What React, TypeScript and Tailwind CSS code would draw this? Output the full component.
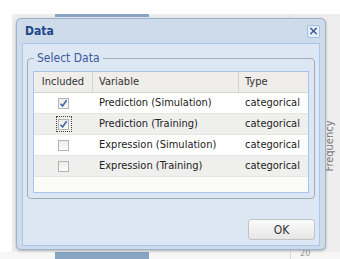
import { X } from "lucide-react";

type Row = {
  included: boolean;
  variable: string;
  type: string;
  focused?: boolean;
};

const rows: Row[] = [
  { included: true, variable: "Prediction (Simulation)", type: "categorical" },
  { included: true, variable: "Prediction (Training)", type: "categorical", focused: true },
  { included: false, variable: "Expression (Simulation)", type: "categorical" },
  { included: false, variable: "Expression (Training)", type: "categorical" },
];

function Check({ checked, focused }: { checked: boolean; focused?: boolean }) {
  return (
    <span
      className={`flex h-[14px] w-[14px] items-center justify-center ${
        focused ? "outline outline-1 outline-dotted outline-[#444]" : ""
      }`}
    >
      <span className="flex h-[11px] w-[11px] items-center justify-center border border-[#b4b4b4] bg-gradient-to-b from-[#ececec] to-[#fdfdfd]">
        {checked && (
          <svg width="9" height="9" viewBox="0 0 9 9">
            <path d="M1.5 4.8 L3.6 7 L7.6 1.2" fill="none" stroke="#4561aa" strokeWidth="1.6" />
          </svg>
        )}
      </span>
    </span>
  );
}

export default function App() {
  return (
    <div
      className="relative h-[259px] w-[340px] overflow-hidden bg-white"
      style={{ fontFamily: '"DejaVu Sans Condensed", "DejaVu Sans", sans-serif' }}
    >
      {/* app behind the dialog */}
      <div className="absolute left-[12px] right-0 top-[14px] h-[238px] bg-[#eeeeee]">
        <div className="ml-[43px] h-[3px] w-[94px] bg-[#87a4c3]" />
        <div className="absolute left-[278px] top-0 h-full w-px bg-[#dadada]" />
        <div className="absolute left-[317px] top-[151px] origin-left -rotate-90 text-[11px] leading-[13px] text-[#777]">
          Frequency
        </div>
      </div>
      <div className="absolute bottom-0 left-0 right-0 flex h-[7px] bg-[#f6f6f6]">
        <div className="ml-[55px] h-full w-[94px] bg-[#87a4c3]" />
        <div className="absolute left-[290px] top-0 h-full w-px bg-[#dadada]" />
        <div className="ml-[151px] -mt-[3px] text-[9px] leading-none text-[#999]">20</div>
      </div>

      {/* dialog */}
      <div className="absolute left-[16px] top-[18px] flex h-[232px] w-[310px] flex-col rounded-[5px] border border-[#9cb2cd] bg-[#cddbea] shadow-[0_1px_3px_rgba(0,0,0,0.25)]">
        <div className="flex h-[24px] items-center justify-between pl-[8px] pr-[5px]">
          <span className="text-[12px] font-bold text-[#1d4888]">Data</span>
          <button className="flex h-[13px] w-[13px] items-center justify-center rounded-[2px] border border-[#a4bde2] bg-[#e4edf8]">
            <X size={12} strokeWidth={3.2} color="#3b5793" />
          </button>
        </div>

        <div className="mx-[5px] flex h-[203px] flex-col border border-[#a9c7ec] bg-[#dde7f3] px-[4px] pt-[7px]">
          <fieldset className="rounded-[4px] border border-[#a3abb6] px-[5px] pb-[5px]">
            <legend className="ml-[1px] px-[3px] text-[12px] leading-[14px] text-[#3a5a9c]">
              Select Data
            </legend>
            <div className="mt-[6px] flex h-[122px] flex-col border border-[#a7c5ea] bg-[#fbfbf8] text-[11px] text-[#222]">
              <div className="flex h-[21px] shrink-0 items-center border-b border-[#d6d6d2] bg-[#efeeea] text-[#333]">
                <div className="flex h-full w-[59px] items-center justify-center border-r border-[#d4d4d0]">
                  Included
                </div>
                <div className="flex h-full w-[146px] items-center border-r border-[#d4d4d0] pl-[6px]">
                  Variable
                </div>
                <div className="flex h-full flex-1 items-center pl-[6px]">Type</div>
              </div>
              {rows.map((r, i) => (
                <div
                  key={r.variable}
                  className={`flex h-[21px] shrink-0 items-center border-b border-[#e6e6e2] ${
                    i % 2 === 1 ? "bg-[#efefed]" : "bg-white"
                  }`}
                >
                  <div className="flex w-[59px] justify-center">
                    <Check checked={r.included} focused={r.focused} />
                  </div>
                  <div className="w-[146px] pl-[6px]">{r.variable}</div>
                  <div className="flex-1 pl-[6px]">{r.type}</div>
                </div>
              ))}
            </div>
          </fieldset>

          <div className="mt-[20px] flex justify-end">
            <button className="h-[21px] w-[67px] rounded-[3px] border border-[#c3c3c3] bg-gradient-to-b from-[#fbfbfb] to-[#e6e6e6] text-[12px] text-[#333]">
              OK
            </button>
          </div>
        </div>
      </div>
    </div>
  );
}
